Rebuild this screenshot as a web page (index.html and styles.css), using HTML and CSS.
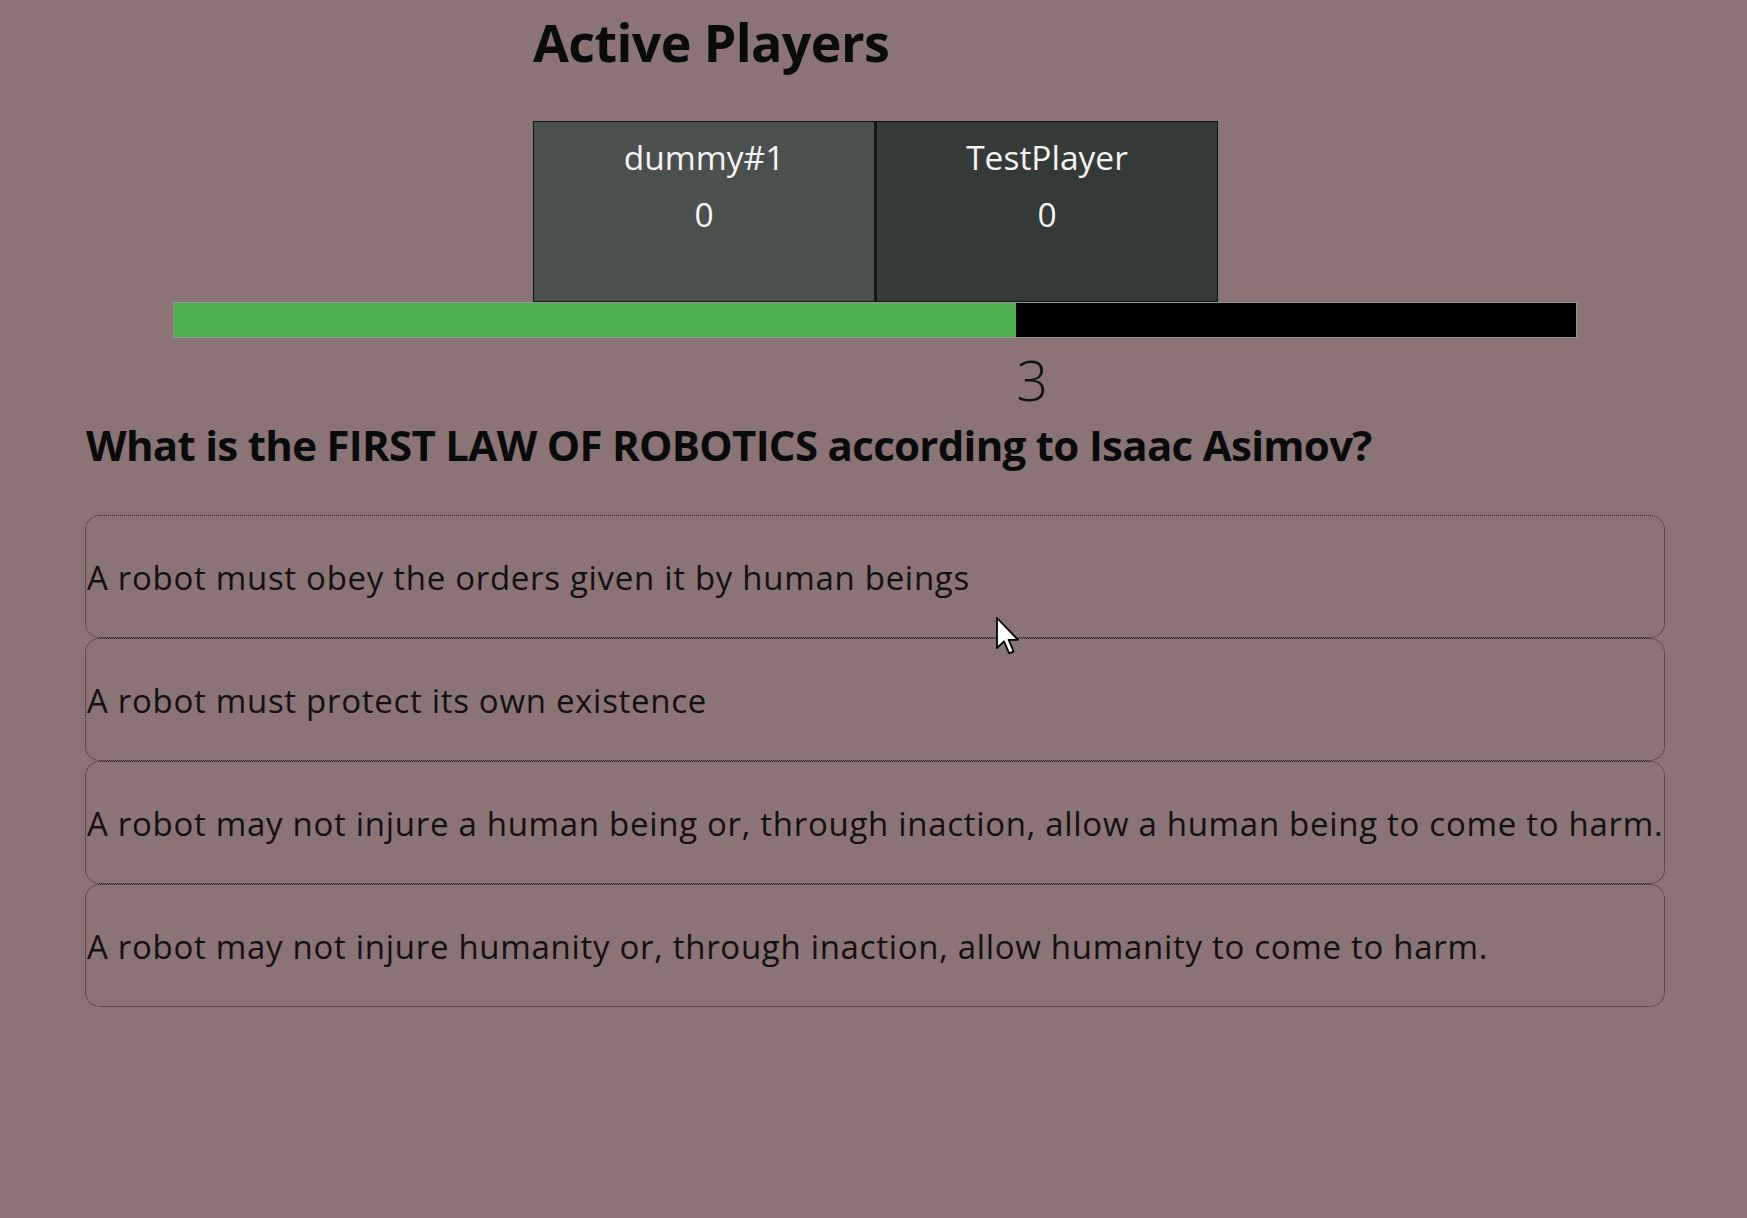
FILE: index.html
```html
<!DOCTYPE html>
<html lang="en">
<head>
<meta charset="utf-8">
<title>Quiz</title>
<link rel="stylesheet" href="styles.css">
</head>
<body>
<div class="page">
  <section class="players">
    <h1 class="players-title">Active Players</h1>
    <div class="player-row">
      <div class="player player-a">
        <div class="player-name">dummy#1</div>
        <div class="player-score">0</div>
      </div>
      <div class="player player-b">
        <div class="player-name">TestPlayer</div>
        <div class="player-score">0</div>
      </div>
    </div>
  </section>
  <div class="timer">
    <div class="timer-fill" style="width: 60.1%"></div>
  </div>
  <div class="timer-label-row">
    <span class="timer-label" style="margin-left: 60.1%">3</span>
  </div>
  <section class="quiz">
    <h2 class="question">What is the FIRST LAW OF ROBOTICS according to Isaac Asimov?</h2>
    <div class="answers">
      <div class="answer">A robot must obey the orders given it by human beings</div>
      <div class="answer">A robot must protect its own existence</div>
      <div class="answer">A robot may not injure a human being or, through inaction, allow a human being to come to harm.</div>
      <div class="answer">A robot may not injure humanity or, through inaction, allow humanity to come to harm.</div>
    </div>
  </section>
</div>
<svg class="cursor" width="26" height="38" viewBox="0 0 13 19" aria-hidden="true">
  <path d="M0.5 0.5 L0.5 15.5 L4 12.2 L6.6 18.2 L8.8 17.2 L6.3 11.4 L11 11.4 Z" fill="#fff" stroke="#000" stroke-width="0.9" stroke-linejoin="round"/>
</svg>
</body>
</html>
```
FILE: styles.css
```css
html, body {
  margin: 0;
  padding: 0;
}
body {
  background: #8a7475;
  font-family: "Open Sans", "Noto Sans", "Liberation Sans", sans-serif;
  color: #111;
  width: 1747px;
  height: 1218px;
  overflow: hidden;
  position: relative;
}
.page {
  display: flex;
  flex-direction: column;
}
.players {
  width: 685px;
  margin: 0 auto;
  padding-top: 10px;
  transform: translateX(2px);
}
.players-title {
  margin: 0;
  font-size: 52px;
  line-height: 64px;
  letter-spacing: -0.6px;
  font-weight: 700;
  color: #0a0a0a;
}
.player-row {
  display: flex;
  margin-top: 47px;
}
.player {
  flex: 1 1 0;
  height: 181px;
  box-sizing: border-box;
  border: 1px solid #151515;
  padding-top: 7px;
  text-align: center;
  color: #f4f4f4;
  font-size: 33.5px;
  line-height: 57px;
}
.player-a {
  background: #4a504d;
}
.player-b {
  background: #343a37;
  border-left-width: 2px;
}
.timer {
  width: 1404px;
  height: 36px;
  box-sizing: border-box;
  margin: 0 auto;
  border: 1px solid #9d9394;
  background: #000;
  display: flex;
  transform: translateX(1px);
}
.timer-fill {
  height: 100%;
  background: #4caf50;
}
.timer-label-row {
  width: 1404px;
  margin: 11px auto 0;
  transform: translateX(1px);
  display: flex;
}
.timer-label {
  display: block;
  font-size: 56px;
  line-height: 60px;
  font-weight: 300;
  color: #111;
}
.quiz {
  padding: 0 82px 0 85px;
}
.question {
  margin: 10px 0 0;
  padding-left: 1px;
  font-size: 42px;
  line-height: 52px;
  letter-spacing: -0.7px;
  font-weight: 700;
  color: #0a0a0a;
}
.answers {
  margin-top: 44px;
  display: flex;
  flex-direction: column;
}
.answer {
  height: 123px;
  box-sizing: border-box;
  border: 1px dotted #2a2222;
  border-radius: 15px;
  display: flex;
  align-items: center;
  padding-left: 1px;
  padding-top: 3px;
  font-size: 33px;
  line-height: 44px;
  letter-spacing: 0.7px;
  color: #141010;
  white-space: nowrap;
}
.cursor {
  position: absolute;
  left: 996px;
  top: 617px;
}
```
